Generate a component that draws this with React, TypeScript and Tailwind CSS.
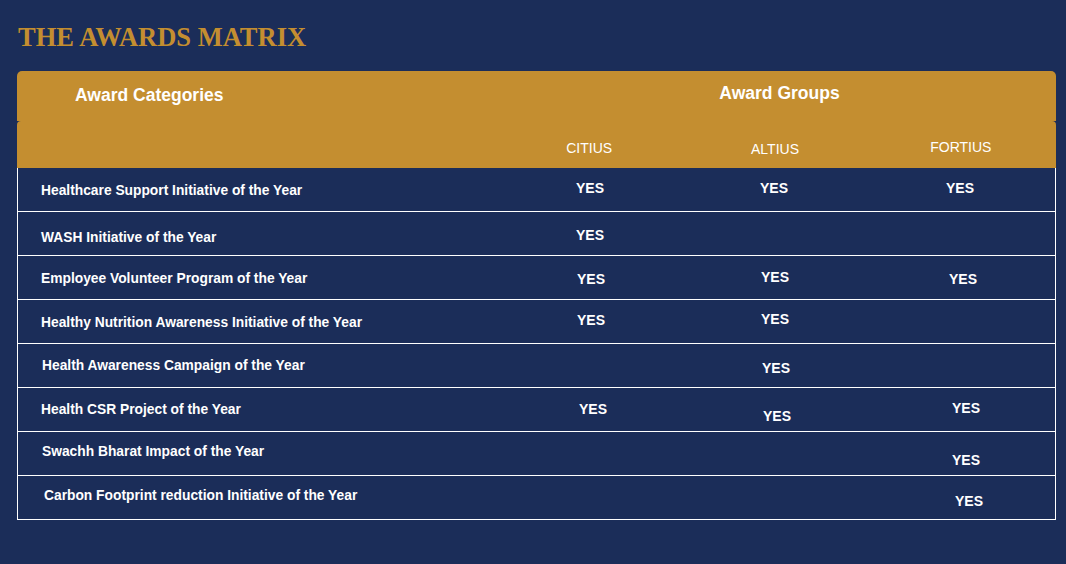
const rows = [
  {
    label: "Healthcare Support Initiative of the Year",
    lab: "pl-[23px] pt-[15px]",
    cells: ["pt-[12px]", "pt-[12px] pr-[4px]", "pt-[12px] pr-[4px]"],
  },
  {
    label: "WASH Initiative of the Year",
    lab: "pl-[23px] pt-[18px]",
    cells: ["pt-[15px]", null, null],
  },
  {
    label: "Employee Volunteer Program of the Year",
    lab: "pl-[23px] pt-[15px]",
    cells: ["pt-[15px] pl-[2px]", "pt-[13px] pr-[2px]", "pt-[15px] pl-[2px]"],
  },
  {
    label: "Healthy Nutrition Awareness Initiative of the Year",
    lab: "pl-[23px] pt-[15px]",
    cells: ["pt-[12px] pl-[2px]", "pt-[11px] pr-[2px]", null],
  },
  {
    label: "Health Awareness Campaign of the Year",
    lab: "pl-[24px] pt-[14px]",
    cells: [null, "pt-[16px]", null],
  },
  {
    label: "Health CSR Project of the Year",
    lab: "pl-[23px] pt-[14px]",
    cells: ["pt-[13px] pl-[6px]", "pt-[20px] pl-[2px]", "pt-[12px] pl-[8px]"],
  },
  {
    label: "Swachh Bharat Impact of the Year",
    lab: "pl-[24px] pt-[12px]",
    cells: [null, null, "pt-[20px] pl-[8px]"],
  },
  {
    label: "Carbon Footprint reduction Initiative of the Year",
    lab: "pl-[26px] pt-[12px]",
    cells: [null, null, "pt-[17px] pl-[14px]"],
  },
];

export default function App() {
  return (
    <div className="min-h-screen w-full bg-[#1b2d59] pl-[17px] pr-[10px] pt-[21px] font-['Liberation_Sans',Arial,sans-serif] text-white">
      {/* Title */}
      <h1 className="h-[32px] pl-px font-['Liberation_Serif','Times_New_Roman',serif] text-[26.5px] font-bold leading-[32px] text-[#c48e30]">
        THE AWARDS MATRIX
      </h1>

      <div className="mt-[18px] w-[1039px]">
        {/* Header row 1 */}
        <div className="grid h-[50px] grid-cols-[480px_1fr] rounded-t-[5px] bg-[#c48e30] text-[17.5px] font-bold leading-[20px]">
          <div className="pl-[58px] pt-[14px]">Award Categories</div>
          <div className="flex justify-center pl-[6px] pt-[12px]">Award Groups</div>
        </div>

        {/* Header row 2 */}
        <div className="grid h-[47px] grid-cols-[480px_1fr_1fr_1fr] rounded-t-[4px] bg-[#c48e30] text-[14px] leading-[16px]">
          <div />
          <div className="flex justify-center pt-[19px] pr-[2px]">CITIUS</div>
          <div className="flex justify-center pt-[20px] pr-[3px]">ALTIUS</div>
          <div className="flex justify-center pt-[18px] pr-[4px]">FORTIUS</div>
        </div>

        {/* Body */}
        <div className="border-x border-white">
          {rows.map((r) => (
            <div
              key={r.label}
              className="grid h-[44px] grid-cols-[479px_1fr_1fr_1fr] border-b border-white text-[14px] font-bold leading-[16px]"
            >
              <div className={r.lab + " text-[13.8px]"}>{r.label}</div>
              {r.cells.map((c, i) => (
                <div key={i} className={c ? "flex justify-center " + c : ""}>
                  {c ? "YES" : null}
                </div>
              ))}
            </div>
          ))}
        </div>
      </div>
    </div>
  );
}
